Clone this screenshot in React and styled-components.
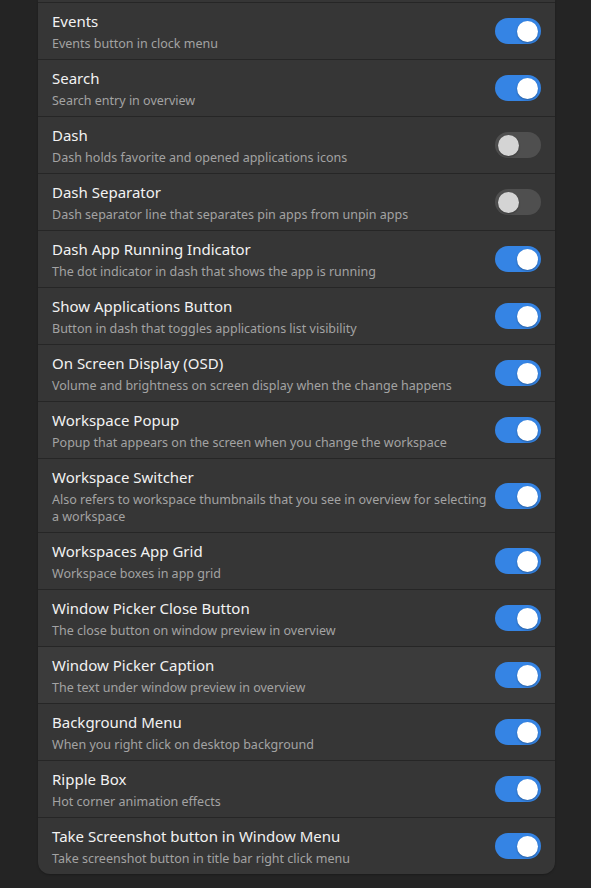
import React from 'react';
import styled, { createGlobalStyle } from 'styled-components';

const rows = [
  { title: 'Events', subtitle: 'Events button in clock menu', on: true },
  { title: 'Search', subtitle: 'Search entry in overview', on: true },
  { title: 'Dash', subtitle: 'Dash holds favorite and opened applications icons', on: false },
  { title: 'Dash Separator', subtitle: 'Dash separator line that separates pin apps from unpin apps', on: false },
  { title: 'Dash App Running Indicator', subtitle: 'The dot indicator in dash that shows the app is running', on: true },
  { title: 'Show Applications Button', subtitle: 'Button in dash that toggles applications list visibility', on: true },
  { title: 'On Screen Display (OSD)', subtitle: 'Volume and brightness on screen display when the change happens', on: true },
  { title: 'Workspace Popup', subtitle: 'Popup that appears on the screen when you change the workspace', on: true },
  { title: 'Workspace Switcher', subtitle: 'Also refers to workspace thumbnails that you see in overview for selecting a workspace', on: true },
  { title: 'Workspaces App Grid', subtitle: 'Workspace boxes in app grid', on: true },
  { title: 'Window Picker Close Button', subtitle: 'The close button on window preview in overview', on: true },
  { title: 'Window Picker Caption', subtitle: 'The text under window preview in overview', on: true, hover: true },
  { title: 'Background Menu', subtitle: 'When you right click on desktop background', on: true },
  { title: 'Ripple Box', subtitle: 'Hot corner animation effects', on: true },
  { title: 'Take Screenshot button in Window Menu', subtitle: 'Take screenshot button in title bar right click menu', on: true },
];

const App = () => (
  <>
    <GlobalStyle />
    <Page>
      <Card>
        {rows.map((row) => (
          <Row key={row.title} $hover={row.hover}>
            <Texts>
              <Title>{row.title}</Title>
              <Subtitle>{row.subtitle}</Subtitle>
            </Texts>
            <Switch $on={row.on}>
              <Knob $on={row.on} />
            </Switch>
          </Row>
        ))}
      </Card>
    </Page>
  </>
);

export default App;

const GlobalStyle = createGlobalStyle`
  html, body {
    margin: 0;
    padding: 0;
    background: #242424;
    overflow: hidden;
  }
  body {
    font-family: "Noto Sans", "Open Sans", sans-serif;
    -webkit-font-smoothing: antialiased;
  }
`;

const Page = styled.div`
  width: 591px;
  height: 888px;
  padding: 0 36px 0 38px;
  box-sizing: border-box;
`;

const Card = styled.div`
  background: #363636;
  border-radius: 0 0 12px 12px;
  padding-top: 2px;
  box-shadow: 0 1px 2px rgba(0, 0, 0, 0.25);
  overflow: hidden;
`;

const Row = styled.div`
  display: flex;
  align-items: center;
  gap: 6px;
  min-height: 57px;
  padding: 0 14px;
  box-sizing: border-box;
  border-top: 1px solid #262626;
  background: ${(p) => (p.$hover ? '#3b3b3b' : 'transparent')};
`;

const Texts = styled.div`
  flex: 1;
  display: flex;
  flex-direction: column;
  gap: 4px;
  padding: 8px 0 7px;
`;

const Title = styled.div`
  font-size: 15px;
  line-height: 20px;
  color: #f2f2f2;
`;

const Subtitle = styled.div`
  font-size: 12.5px;
  line-height: 17px;
  color: #a3a3a3;
`;

const Switch = styled.div`
  flex: none;
  position: relative;
  width: 46px;
  height: 26px;
  border-radius: 13px;
  background: ${(p) => (p.$on ? '#3584e4' : '#4f4f4f')};
`;

const Knob = styled.div`
  position: absolute;
  top: 3px;
  left: ${(p) => (p.$on ? '22px' : '3px')};
  width: 21px;
  height: 21px;
  border-radius: 50%;
  background: ${(p) => (p.$on ? '#ffffff' : '#d4d4d4')};
  box-shadow: 0 1px 2px rgba(0, 0, 0, 0.3);
`;
